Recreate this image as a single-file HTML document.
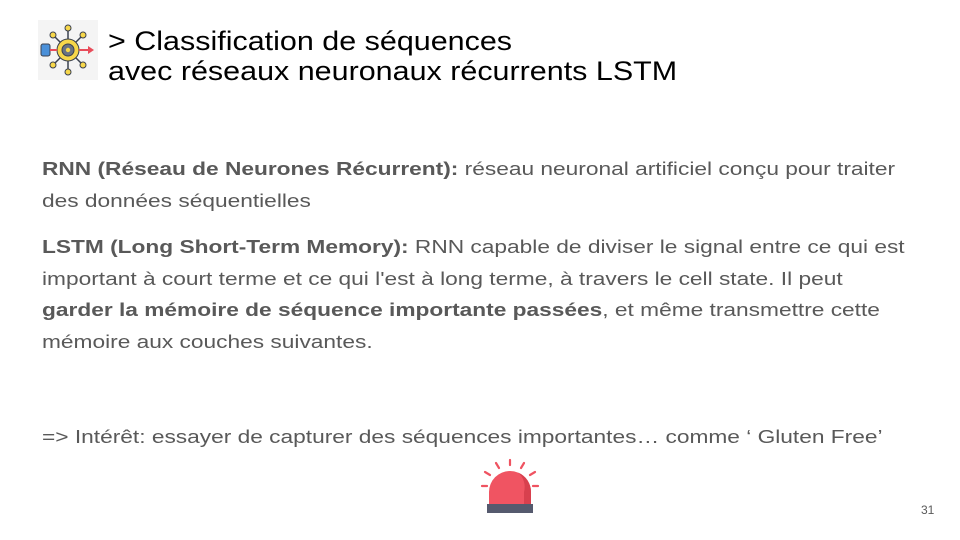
<!DOCTYPE html>
<html><head><meta charset="utf-8"><style>
body{margin:0;width:960px;height:540px;background:#fff;position:relative;overflow:hidden;font-family:"Liberation Sans",Arial,sans-serif}
.t{position:absolute;left:108px;top:26px;font-size:26.5px;line-height:30px;color:#000;white-space:nowrap;transform:scaleX(1.15);transform-origin:0 0}
.p{position:absolute;left:42px;font-size:18.7px;line-height:31.5px;color:#595959;white-space:nowrap;transform:scaleX(1.215);transform-origin:0 0}
b{color:#595959}
.n{position:absolute;left:921px;top:503px;font-size:12px;color:#595959}
</style></head><body>
<svg style="position:absolute;left:38px;top:20px" width="60" height="60" viewBox="0 0 60 60">
<rect width="60" height="60" fill="#f4f4f4"/>
<g stroke="#3a4150" stroke-width="1.5" fill="none">
<line x1="30" y1="30" x2="30" y2="8"/><line x1="30" y1="30" x2="30" y2="52"/>
<line x1="30" y1="30" x2="15" y2="15"/><line x1="30" y1="30" x2="45" y2="15"/>
<line x1="30" y1="30" x2="15" y2="45"/><line x1="30" y1="30" x2="45" y2="45"/>
</g>
<g fill="#f7d74a" stroke="#3a4150" stroke-width="1">
<circle cx="30" cy="8" r="3"/><circle cx="30" cy="52" r="3"/><circle cx="15" cy="15" r="3"/><circle cx="45" cy="15" r="3"/><circle cx="15" cy="45" r="3"/><circle cx="45" cy="45" r="3"/>
<circle cx="30" cy="30" r="11"/></g>
<circle cx="30" cy="30" r="6" fill="#6a7383" stroke="#3a4150"/>
<circle cx="30" cy="30" r="2.2" fill="#f7d74a"/>
<rect x="3" y="24" width="9" height="12" rx="2" fill="#4a90d9" stroke="#3a4150"/>
<line x1="12" y1="30" x2="19" y2="30" stroke="#e84c5a" stroke-width="2"/>
<line x1="41" y1="30" x2="50" y2="30" stroke="#e84c5a" stroke-width="2"/>
<polygon points="50,26 56,30 50,34" fill="#e84c5a"/>
</svg>
<div class="t">&gt; Classification de séquences<br>avec réseaux neuronaux récurrents LSTM</div>
<div class="p" style="top:153px"><b>RNN (Réseau de Neurones Récurrent):</b> réseau neuronal artificiel conçu pour traiter<br>des données séquentielles</div>
<div class="p" style="top:231px"><b>LSTM (Long Short-Term Memory):</b> RNN capable de diviser le signal entre ce qui est<br>important à court terme et ce qui l'est à long terme, à travers le cell state. Il peut<br><b>garder la mémoire de séquence importante passées</b>, et même transmettre cette<br>mémoire aux couches suivantes.</div>
<div class="p" style="top:421px">=&gt; Intérêt: essayer de capturer des séquences importantes… comme ‘ Gluten Free’</div>
<svg style="position:absolute;left:480px;top:458px" width="60" height="58" viewBox="0 0 60 58">
<g stroke="#ef5361" stroke-width="2.2" stroke-linecap="round">
<line x1="30" y1="2" x2="30" y2="7"/><line x1="16" y1="5" x2="19" y2="10"/><line x1="44" y1="5" x2="41" y2="10"/>
<line x1="5" y1="14" x2="10" y2="17"/><line x1="55" y1="14" x2="50" y2="17"/>
<line x1="2" y1="28" x2="7" y2="28"/><line x1="53" y1="28" x2="58" y2="28"/></g>
<path d="M9 46 V34 A21 21 0 0 1 51 34 V46 Z" fill="#f05462"/>
<path d="M38 14.5 A21 21 0 0 1 51 34 V46 H44 V34 A19 19 0 0 0 38 14.5Z" fill="#d8404e"/>
<rect x="7" y="46" width="46" height="9" fill="#555a6e"/>
</svg>
<div class="n">31</div>
</body></html>
